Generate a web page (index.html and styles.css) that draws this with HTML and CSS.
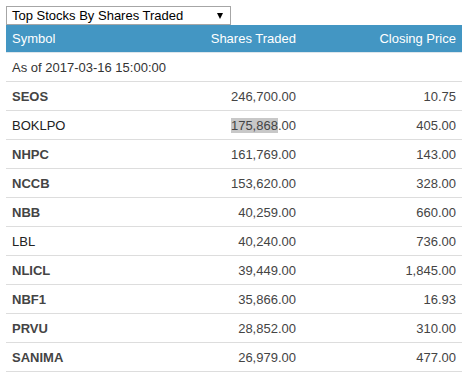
FILE: index.html
```html
<!DOCTYPE html>
<html>
<head>
<meta charset="utf-8">
<link rel="stylesheet" href="styles.css">
</head>
<body>
<div class="wrap">
  <div class="select"><span class="select-text">Top Stocks By Shares Traded</span><span class="arrow"></span></div>
  <table class="stocks">
    <colgroup><col class="c1"><col class="c2"><col class="c3"></colgroup>
    <thead>
      <tr><th class="l">Symbol</th><th class="r">Shares Traded</th><th class="r">Closing Price</th></tr>
    </thead>
    <tbody>
      <tr><td class="l asof" colspan="3">As of 2017-03-16 15:00:00</td></tr>
      <tr><td class="l sym b">SEOS</td><td class="r num">246,700.00</td><td class="r num">10.75</td></tr>
      <tr><td class="l sym">BOKLPO</td><td class="r num"><span class="hl">175,868</span>.00</td><td class="r num">405.00</td></tr>
      <tr><td class="l sym b">NHPC</td><td class="r num">161,769.00</td><td class="r num">143.00</td></tr>
      <tr><td class="l sym b">NCCB</td><td class="r num">153,620.00</td><td class="r num">328.00</td></tr>
      <tr><td class="l sym b">NBB</td><td class="r num">40,259.00</td><td class="r num">660.00</td></tr>
      <tr><td class="l sym">LBL</td><td class="r num">40,240.00</td><td class="r num">736.00</td></tr>
      <tr><td class="l sym b">NLICL</td><td class="r num">39,449.00</td><td class="r num">1,845.00</td></tr>
      <tr><td class="l sym b">NBF1</td><td class="r num">35,866.00</td><td class="r num">16.93</td></tr>
      <tr><td class="l sym b">PRVU</td><td class="r num">28,852.00</td><td class="r num">310.00</td></tr>
      <tr><td class="l sym b">SANIMA</td><td class="r num">26,979.00</td><td class="r num">477.00</td></tr>
    </tbody>
  </table>
</div>
</body>
</html>
```
FILE: styles.css
```css
html, body {
  margin: 0;
  padding: 0;
  background: #fff;
}
body {
  font-family: "Liberation Sans", Arial, sans-serif;
  font-size: 13px;
  color: #333;
}
.wrap {
  width: 456px;
  padding: 6px 0 0 6px;
}
.select {
  box-sizing: border-box;
  width: 225px;
  height: 19px;
  border: 1px solid #a6a6a6;
  display: flex;
  align-items: center;
  justify-content: space-between;
  padding: 0 7px 0 5px;
  color: #000;
  line-height: 17px;
}
.arrow {
  width: 0;
  height: 0;
  border-left: 3px solid transparent;
  border-right: 3px solid transparent;
  border-top: 6px solid #000;
  margin-top: 1px;
}
.stocks {
  width: 456px;
  border-collapse: collapse;
  table-layout: fixed;
}
.c1 { width: 148px; }
.c2 { width: 148px; }
.c3 { width: 160px; }
.stocks th {
  background: #4396c3;
  color: #fff;
  font-weight: normal;
  height: 27px;
  padding: 0 6px;
  border-bottom: 1px solid #dde6ec;
}
.stocks td {
  height: 28px;
  padding: 0 6px;
  border-bottom: 1px solid #ddd;
}
.l { text-align: left; }
.r { text-align: right; }
.sym { color: #222; }
.b { font-weight: bold; color: #444; }
.num { color: #444; }
.asof { color: #333; }
.hl { background: #c8c8c8; }
```
